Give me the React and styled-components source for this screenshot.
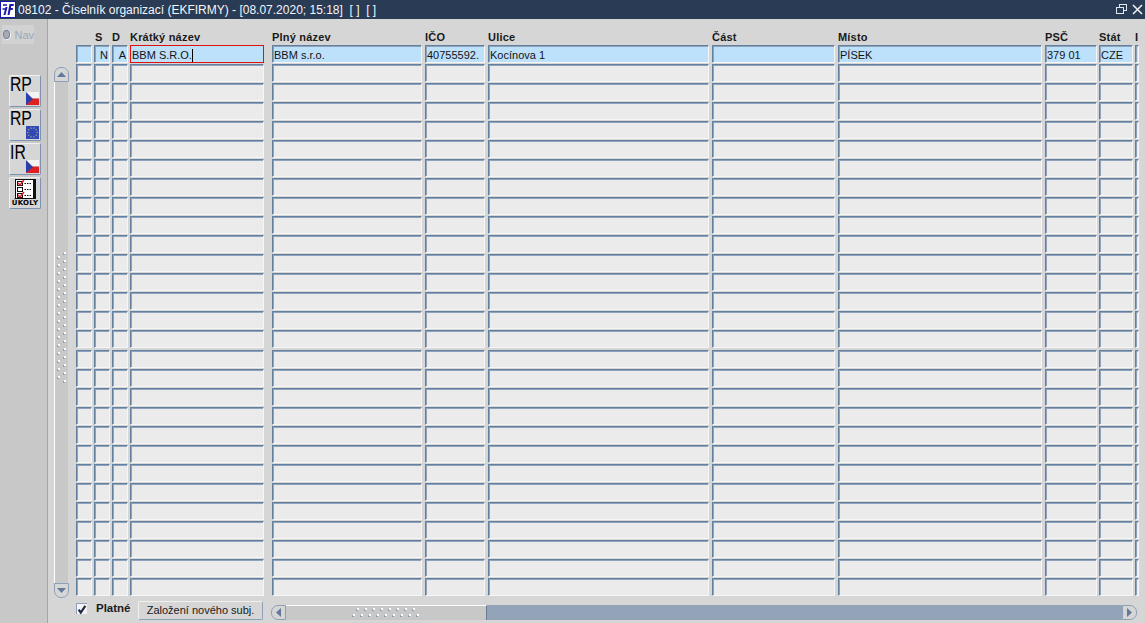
import styled, { createGlobalStyle } from "styled-components";

const GlobalStyle = createGlobalStyle`
  html, body { margin: 0; padding: 0; overflow: hidden; }
  body { font-family: "Liberation Sans", Arial, sans-serif; background: #d6d6d6; }
`;

const columns = [
  { key: "mark", width: 16, gap: 2 },
  { key: "s", label: "S", width: 16, gap: 2, value: "N", center: true, indent: 1 },
  { key: "d", label: "D", width: 16, gap: 2, value: "A", center: true },
  { key: "short", label: "Krátký název", width: 134, gap: 8, value: "BBM S.R.O.", focus: true },
  { key: "full", label: "Plný název", width: 150, gap: 3, value: "BBM s.r.o." },
  { key: "ico", label: "IČO", width: 60, gap: 3, value: "40755592." },
  { key: "street", label: "Ulice", width: 221, gap: 3, value: "Kocínova 1" },
  { key: "part", label: "Část", width: 123, gap: 3, value: "" },
  { key: "city", label: "Místo", width: 204, gap: 3, value: "PÍSEK" },
  { key: "zip", label: "PSČ", width: 52, gap: 2, value: "379 01" },
  { key: "state", label: "Stát", width: 34, gap: 2, value: "CZE" },
  { key: "more", label: "I", width: 3, gap: 0, value: "" },
];

const rowCount = 29;

export default function App() {
  return (
    <>
      <GlobalStyle />
      <Page>
        <TitleBar>
          <Logo>
            <svg width="16" height="17" viewBox="0 0 16 17">
              <rect x="0.5" y="0.5" width="15" height="16" fill="#fff" stroke="#1a1aa8" />
              <path d="M5.5 6 L7.5 6 L5.5 14 L3.5 14 Z" fill="#1a1aa8" />
              <path d="M3 4 H7 M2.5 8 H7" stroke="#1a1aa8" strokeWidth="1.4" />
              <path d="M9.5 3 L14 3 L13.6 5 L11.3 5 L10.9 7 L13 7 L12.6 9 L10.5 9 L9.5 14 L7.5 14 Z" fill="#1a1aa8" />
            </svg>
          </Logo>
          <Title>08102 - Číselník organizací (EKFIRMY) - [08.07.2020; 15:18]&nbsp; [ ]&nbsp; [ ]</Title>
          <WindowButtons>
            <svg width="11" height="11" viewBox="0 0 11 11" fill="none" stroke="#e4e8ee">
              <rect x="3.5" y="0.5" width="7" height="6" />
              <rect x="0.5" y="3.5" width="7" height="6" fill="#2a3b55" />
            </svg>
            <svg width="11" height="11" viewBox="0 0 11 11" fill="none" stroke="#f2f4f8" strokeWidth="1.5">
              <path d="M1 1 L10 10 M10 1 L1 10" />
            </svg>
          </WindowButtons>
        </TitleBar>
        <Body>
          <Sidebar>
            <NavRadio>
              <RadioDot />
              Nav
            </NavRadio>
            <ToolList>
              <ToolButton>
                <ToolLetters>RP</ToolLetters>
                <CzechFlag />
              </ToolButton>
              <ToolButton>
                <ToolLetters>RP</ToolLetters>
                <EuFlag />
              </ToolButton>
              <ToolButton>
                <ToolLetters>IR</ToolLetters>
                <CzechFlag />
              </ToolButton>
              <ToolButton>
                <TasksIcon />
                <TasksLabel>ÚKOLY</TasksLabel>
              </ToolButton>
            </ToolList>
          </Sidebar>
          <Main>
            <VerticalBar>
              <ArrowButton $top>
                <svg width="9" height="5" viewBox="0 0 9 5">
                  <path d="M4.5 0 L9 5 H0 Z" fill="#64789a" />
                </svg>
              </ArrowButton>
              <VerticalThumb>
                <GripColumn />
              </VerticalThumb>
              <ArrowButton>
                <svg width="9" height="5" viewBox="0 0 9 5">
                  <path d="M0 0 H9 L4.5 5 Z" fill="#64789a" />
                </svg>
              </ArrowButton>
            </VerticalBar>
            <Content>
              <HeaderRow>
                {columns.map((col) => (
                  <HeaderCell key={col.key} $width={col.width} $gap={col.gap} $indent={col.indent}>
                    {col.label}
                  </HeaderCell>
                ))}
              </HeaderRow>
              <Rows>
                {Array.from({ length: rowCount }, (_, i) => (
                  <Row key={i}>
                    {columns.map((col) => (
                      <Cell
                        key={col.key}
                        $width={col.width}
                        $gap={col.gap}
                        $selected={i === 0}
                        $focus={i === 0 && col.focus}
                        $center={col.center}
                      >
                        {i === 0 && col.value}
                        {i === 0 && col.focus && <Caret />}
                      </Cell>
                    ))}
                  </Row>
                ))}
              </Rows>
              <Footer>
                <CheckBox>
                  <svg width="12" height="12" viewBox="0 0 12 12" fill="none">
                    <path d="M2 5.5 L4.5 9 L10 1" stroke="#1e2a40" strokeWidth="2.6" />
                  </svg>
                </CheckBox>
                <CheckLabel>Platné</CheckLabel>
                <FooterButton>Založení nového subj.</FooterButton>
                <HorizontalBar>
                  <SideButton $left>
                    <svg width="5" height="9" viewBox="0 0 5 9">
                      <path d="M5 0 V9 L0 4.5 Z" fill="#64789a" />
                    </svg>
                  </SideButton>
                  <HorizontalThumb>
                    <GripRow />
                  </HorizontalThumb>
                  <HorizontalTrack />
                  <SideButton>
                    <svg width="5" height="9" viewBox="0 0 5 9">
                      <path d="M0 0 L5 4.5 L0 9 Z" fill="#64789a" />
                    </svg>
                  </SideButton>
                </HorizontalBar>
              </Footer>
            </Content>
          </Main>
        </Body>
      </Page>
    </>
  );
}

function GripDot({ x, y }) {
  return (
    <>
      <rect x={x} y={y + 1} width="2" height="2" fill="#8ea0b8" />
      <rect x={x + 1} y={y} width="2" height="2" fill="#fff" />
    </>
  );
}

function GripColumn() {
  return (
    <GripSvg width="10" height="134" viewBox="0 0 10 134">
      {Array.from({ length: 17 }, (_, i) => (
        <GripDot key={i} x={6} y={i * 8} />
      ))}
      {Array.from({ length: 16 }, (_, i) => (
        <GripDot key={i} x={0} y={i * 8 + 4} />
      ))}
    </GripSvg>
  );
}

function GripRow() {
  return (
    <GripSvg width="68" height="10" viewBox="0 0 68 10">
      {Array.from({ length: 8 }, (_, i) => (
        <GripDot key={i} x={i * 8 + 4} y={0} />
      ))}
      {Array.from({ length: 9 }, (_, i) => (
        <GripDot key={i} x={i * 8} y={6} />
      ))}
    </GripSvg>
  );
}

function CzechFlag() {
  return (
    <FlagSvg width="13" height="13" viewBox="0 0 13 13">
      <rect width="13" height="6.5" fill="#f4f4f4" />
      <rect y="6.5" width="13" height="6.5" fill="#e02020" />
      <path d="M0 0 L7 7 L0 13 Z" fill="#2c3fa8" />
    </FlagSvg>
  );
}

function EuFlag() {
  const stars = Array.from({ length: 10 }, (_, i) => {
    const a = (i / 10) * Math.PI * 2;
    return [6.5 + Math.cos(a) * 4.6, 6.5 + Math.sin(a) * 4.6];
  });
  return (
    <FlagSvg width="13" height="13" viewBox="0 0 13 13">
      <rect width="13" height="13" fill="#3048b8" />
      {stars.map(([x, y], i) => (
        <rect key={i} x={x - 0.5} y={y - 0.5} width="1" height="1" fill="#f0e040" />
      ))}
    </FlagSvg>
  );
}

function TasksIcon() {
  return (
    <svg width="21" height="20" viewBox="0 0 21 20">
      <rect x="0.5" y="0.5" width="18" height="19" fill="#fff" stroke="#111" />
      <rect x="18" y="0" width="3" height="20" fill="#111" />
      <rect x="2.5" y="2.5" width="5" height="4" fill="#fff" stroke="#111" />
      <rect x="2.5" y="8.5" width="5" height="4" fill="#fff" stroke="#111" />
      <rect x="2.5" y="14.5" width="5" height="4" fill="#fff" stroke="#111" />
      <path d="M3 4 L5 6 L9 1 M3 16 L5 18 L9 13" fill="none" stroke="#d81818" strokeWidth="1.4" />
      <path d="M9.5 4.5 H17 M9.5 10.5 H17 M9.5 16.5 H17" stroke="#111" strokeDasharray="1.5 1" />
    </svg>
  );
}

const Page = styled.div`
  width: 1145px;
  height: 623px;
  display: flex;
  flex-direction: column;
  overflow: hidden;
`;

const TitleBar = styled.header`
  height: 19px;
  flex: none;
  display: flex;
  align-items: center;
  background: #2a3b55;
  color: #f4f6fa;
  font-size: 12px;
  padding-right: 2px;
`;

const Logo = styled.div`
  width: 16px;
  height: 17px;
  margin-right: 2px;
  display: flex;
`;

const Title = styled.div`
  flex: 1;
  white-space: nowrap;
`;

const WindowButtons = styled.div`
  display: flex;
  align-items: center;
  gap: 5px;
`;

const Body = styled.div`
  flex: 1;
  display: flex;
  min-height: 0;
`;

const Sidebar = styled.aside`
  width: 47px;
  flex: none;
  box-sizing: content-box;
  background: #c8c8c8;
  border-right: 1px solid #98a8b8;
  padding-top: 6px;
`;

const NavRadio = styled.div`
  width: 32px;
  height: 19px;
  margin-left: 2px;
  display: flex;
  align-items: center;
  gap: 4px;
  background: #d2d2d2;
  color: #9aa8bc;
  font-size: 11px;
`;

const RadioDot = styled.span`
  width: 7px;
  height: 7px;
  margin-left: 1px;
  border-radius: 50%;
  background: #a6acb6;
  border: 1px solid #72808f;
  box-shadow: 0.5px 0.5px 0 0.5px #f4f4f4;
`;

const ToolList = styled.div`
  display: flex;
  flex-direction: column;
  gap: 2px;
  margin: 31px 0 0 9px;
`;

const ToolButton = styled.div`
  position: relative;
  width: 32px;
  height: 32px;
  box-sizing: border-box;
  background: #d6d6d6;
  border: 1px solid;
  border-color: #f0f0f0 #7d92b0 #7d92b0 #f0f0f0;
  border-radius: 2px;
  display: flex;
  flex-direction: column;
  align-items: center;
  padding-top: 1px;
`;

const ToolLetters = styled.span`
  position: absolute;
  left: 0;
  top: -3px;
  font-size: 21px;
  line-height: 22px;
  color: #000;
  transform: scaleX(0.75);
  transform-origin: left top;
`;

const FlagSvg = styled.svg`
  position: absolute;
  right: 1px;
  bottom: 1px;
`;

const TasksLabel = styled.span`
  font-family: "DejaVu Sans", sans-serif;
  font-size: 7px;
  line-height: 8px;
  font-weight: 700;
  letter-spacing: 0.3px;
  color: #000;
  white-space: nowrap;
`;

const Main = styled.main`
  flex: 1;
  display: flex;
  min-width: 0;
  background: #d6d6d6;
`;

const VerticalBar = styled.div`
  width: 15px;
  flex: none;
  margin: 48px 0 25px 6px;
  display: flex;
  flex-direction: column;
`;

const ArrowButton = styled.div`
  height: 15px;
  flex: none;
  display: flex;
  align-items: center;
  justify-content: center;
  box-sizing: border-box;
  background: #d6d6d6;
  border: 1px solid #8ea0b8;
  border-radius: ${(p) => (p.$top ? "7px 7px 0 0" : "0 0 7px 7px")};
`;

const VerticalThumb = styled.div`
  flex: 1;
  background: #c8c8c8;
  border-left: 1px solid #fff;
  margin-right: 1px;
  padding: 170px 0 0 2px;
`;

const GripSvg = styled.svg`
  display: block;
`;

const Content = styled.div`
  flex: 1;
  min-width: 0;
  padding-left: 7px;
  overflow: hidden;
`;

const HeaderRow = styled.div`
  display: flex;
  height: 26px;
  align-items: flex-end;
  padding-bottom: 1px;
  box-sizing: border-box;
`;

const HeaderCell = styled.div`
  flex: none;
  box-sizing: border-box;
  width: ${(p) => p.$width}px;
  margin-right: ${(p) => p.$gap}px;
  padding-left: ${(p) => p.$indent || 0}px;
  font-size: 11px;
  font-weight: 700;
  line-height: 13px;
  color: #1a1a1a;
  letter-spacing: 0.2px;
  white-space: nowrap;
`;

const Rows = styled.div`
  display: flex;
  flex-direction: column;
  gap: 1px;
`;

const Row = styled.div`
  display: flex;
  height: 18.04px;
`;

const Cell = styled.div`
  flex: none;
  box-sizing: border-box;
  width: ${(p) => p.$width}px;
  margin-right: ${(p) => p.$gap}px;
  height: 18px;
  padding: 1px ${(p) => (p.$focus ? "1px" : "1px")} 0 1px;
  font-size: 11px;
  line-height: 16px;
  color: #141414;
  white-space: nowrap;
  overflow: hidden;
  text-align: ${(p) => (p.$center ? "right" : "left")};
  background: ${(p) => (p.$selected ? "#bde0fb" : "#ebebeb")};
  border-style: solid;
  border-width: 1px;
  border-color: ${(p) => (p.$focus ? "#e01010" : "#64809f #f6f6f6 #f6f6f6 #64809f")};
  box-shadow: ${(p) => (p.$focus ? "none" : "inset 1px 1px 0 #8ea2bc")};
`;

const Caret = styled.span`
  display: inline-block;
  width: 1px;
  height: 13px;
  background: #000;
  vertical-align: -3px;
`;

const Footer = styled.div`
  display: flex;
  align-items: flex-start;
  margin-top: 5px;
`;

const CheckBox = styled.div`
  width: 11px;
  height: 11px;
  box-sizing: border-box;
  margin-top: 2px;
  background: #f4f4f4;
  border-top: 1px solid #8ea0b8;
  border-left: 1px solid #8ea0b8;
  display: flex;
`;

const CheckLabel = styled.span`
  width: 42px;
  margin-left: 9px;
  font-size: 11.5px;
  font-weight: 700;
  line-height: 15px;
  color: #1a1a1a;
`;

const FooterButton = styled.div`
  width: 125px;
  height: 19px;
  box-sizing: border-box;
  background: #d6d6d6;
  border: 1px solid #8ea0b8;
  border-top-color: #f0f0f0;
  border-left-color: #f0f0f0;
  border-radius: 2px;
  font-size: 11px;
  line-height: 17px;
  text-align: center;
  color: #1a1a1a;
  white-space: nowrap;
`;

const HorizontalBar = styled.div`
  width: 866px;
  height: 15px;
  margin: 4px 0 0 8px;
  display: flex;
`;

const SideButton = styled.div`
  width: 15px;
  flex: none;
  display: flex;
  align-items: center;
  justify-content: center;
  box-sizing: border-box;
  background: #d6d6d6;
  border: 1px solid #8ea0b8;
  border-radius: ${(p) => (p.$left ? "7px 0 0 7px" : "0 7px 7px 0")};
`;

const HorizontalThumb = styled.div`
  width: 201px;
  flex: none;
  box-sizing: border-box;
  background: #c8c8c8;
  border-top: 1px solid #fff;
  border-right: 1px solid #6a7a90;
  display: flex;
  align-items: center;
  justify-content: center;
`;

const HorizontalTrack = styled.div`
  flex: 1;
  background: #94a4b8;
`;
